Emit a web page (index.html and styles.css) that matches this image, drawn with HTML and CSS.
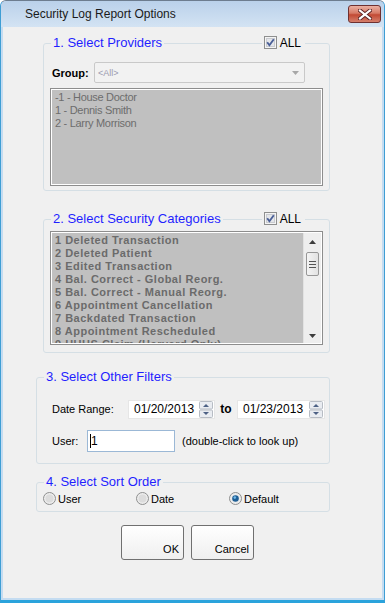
FILE: index.html
```html
<!DOCTYPE html>
<html lang="en">
<head>
    <meta charset="UTF-8">
    <meta name="viewport" content="width=device-width, initial-scale=1.0">
    <title>Security Log Report Options</title>
    <link rel="stylesheet" href="styles.css">
</head>
<body>
<div class="window">
    <div class="titlebar">
        <span class="title">Security Log Report Options</span>
        <button class="close" type="button" aria-label="Close">
            <svg width="14" height="11" viewBox="0 0 14 11">
                <path d="M2 1.5 L12 9.5 M12 1.5 L2 9.5" stroke="#5b2323" stroke-width="4" stroke-linecap="square"/>
                <path d="M2 1.5 L12 9.5 M12 1.5 L2 9.5" stroke="#ffffff" stroke-width="2.2" stroke-linecap="square"/>
            </svg>
        </button>
    </div>

    <div class="client">
        <!-- 1. providers -->
        <div class="group narrow">
            <div class="group-head">
                <span class="legend">1. Select Providers</span>
                <span class="all">
                    <svg class="check" width="13" height="13" viewBox="0 0 13 13">
                        <rect x="0.5" y="0.5" width="12" height="12" fill="#f4f4f4" stroke="#8e8f8f"/>
                        <rect x="2.5" y="2.5" width="8" height="8" fill="#e4e6ea" stroke="#c9cbd0"/>
                        <path d="M3.2 6.3 L5.4 9.2 L9.8 3.2" fill="none" stroke="#4a5f97" stroke-width="1.9"/>
                    </svg>
                    ALL
                </span>
            </div>
            <div class="combo-row">
                <span class="combo-label">Group:</span>
                <div class="combo">
                    <span class="combo-text">&lt;All&gt;</span>
                    <svg width="7" height="4" viewBox="0 0 7 4"><path d="M0 0 H7 L3.5 4 Z" fill="#a8a8a8"/></svg>
                </div>
            </div>
            <div class="listbox providers">
                <div>-1 - House Doctor</div>
                <div>1 - Dennis Smith</div>
                <div>2 - Larry Morrison</div>
            </div>
        </div>

        <!-- 2. categories -->
        <div class="group narrow second">
            <div class="group-head">
                <span class="legend">2. Select Security Categories</span>
                <span class="all">
                    <svg class="check" width="13" height="13" viewBox="0 0 13 13">
                        <rect x="0.5" y="0.5" width="12" height="12" fill="#f4f4f4" stroke="#8e8f8f"/>
                        <rect x="2.5" y="2.5" width="8" height="8" fill="#e4e6ea" stroke="#c9cbd0"/>
                        <path d="M3.2 6.3 L5.4 9.2 L9.8 3.2" fill="none" stroke="#4a5f97" stroke-width="1.9"/>
                    </svg>
                    ALL
                </span>
            </div>
            <div class="listbox categories">
                <div class="items">
                    <div>1 Deleted Transaction</div>
                    <div>2 Deleted Patient</div>
                    <div>3 Edited Transaction</div>
                    <div>4 Bal. Correct - Global Reorg.</div>
                    <div>5 Bal. Correct - Manual Reorg.</div>
                    <div>6 Appointment Cancellation</div>
                    <div>7 Backdated Transaction</div>
                    <div>8 Appointment Rescheduled</div>
                    <div>9 HUHS Claim (Harvard Only)</div>
                </div>
                <div class="scrollbar">
                    <svg width="7" height="4" viewBox="0 0 7 4"><path d="M0 4 H7 L3.5 0 Z" fill="#3c3c3c"/></svg>
                    <div class="thumb"><span></span><span></span><span></span></div>
                    <div class="track"></div>
                    <svg width="7" height="4" viewBox="0 0 7 4"><path d="M0 0 H7 L3.5 4 Z" fill="#3c3c3c"/></svg>
                </div>
            </div>
        </div>

        <!-- 3. other filters -->
        <div class="group third">
            <div class="group-head">
                <span class="legend">3. Select Other Filters</span>
            </div>
            <div class="filter-row dates">
                <span class="filter-label">Date Range:</span>
                <div class="date-box">
                    <span class="date-text">01/20/2013</span>
                    <svg class="spin" width="14" height="17" viewBox="0 0 14 17">
                        <rect x="0.5" y="0.5" width="13" height="7.5" rx="1" fill="#e9ecf1" stroke="#b7bcc4"/>
                        <rect x="0.5" y="9" width="13" height="7.5" rx="1" fill="#e9ecf1" stroke="#b7bcc4"/>
                        <path d="M4 6 H10 L7 3 Z" fill="#4d6185"/>
                        <path d="M4 11 H10 L7 14 Z" fill="#4d6185"/>
                    </svg>
                </div>
                <span class="to">to</span>
                <div class="date-box">
                    <span class="date-text">01/23/2013</span>
                    <svg class="spin" width="14" height="17" viewBox="0 0 14 17">
                        <rect x="0.5" y="0.5" width="13" height="7.5" rx="1" fill="#e9ecf1" stroke="#b7bcc4"/>
                        <rect x="0.5" y="9" width="13" height="7.5" rx="1" fill="#e9ecf1" stroke="#b7bcc4"/>
                        <path d="M4 6 H10 L7 3 Z" fill="#4d6185"/>
                        <path d="M4 11 H10 L7 14 Z" fill="#4d6185"/>
                    </svg>
                </div>
            </div>
            <div class="filter-row user">
                <span class="filter-label short">User:</span>
                <div class="user-box"><span class="caret"></span>1</div>
                <span class="hint">(double-click to look up)</span>
            </div>
        </div>

        <!-- 4. sort order -->
        <div class="group fourth">
            <div class="group-head">
                <span class="legend">4. Select Sort Order</span>
            </div>
            <div class="radios">
                <label class="radio">
                    <svg width="13" height="13" viewBox="0 0 13 13"><circle cx="6.5" cy="6.5" r="6" fill="#ececec" stroke="#8e8f8f"/><circle cx="6.5" cy="6.5" r="4" fill="#dcdcdc"/></svg>
                    User
                </label>
                <label class="radio">
                    <svg width="13" height="13" viewBox="0 0 13 13"><circle cx="6.5" cy="6.5" r="6" fill="#ececec" stroke="#8e8f8f"/><circle cx="6.5" cy="6.5" r="4" fill="#dcdcdc"/></svg>
                    Date
                </label>
                <label class="radio">
                    <svg width="13" height="13" viewBox="0 0 13 13"><circle cx="6.5" cy="6.5" r="6" fill="#ececec" stroke="#8e8f8f"/><circle cx="6.5" cy="6.5" r="3.3" fill="#1f5f95"/><circle cx="5.8" cy="5.6" r="1.3" fill="#6fb8e8"/></svg>
                    Default
                </label>
            </div>
        </div>

        <div class="buttons">
            <button class="button" type="button">OK</button>
            <button class="button" type="button">Cancel</button>
        </div>
    </div>
</div>
</body>
</html>
```

FILE: styles.css
```css
body {
    margin: 0;
    font-family: "Liberation Sans", Arial, sans-serif;
    font-size: 11px;
    color: #000;
    background: #fff;
}
.window {
    width: 385px;
    height: 603px;
    box-sizing: border-box;
    display: flex;
    flex-direction: column;
    border: 1px solid #3f9ed4;
    border-top-color: #6d7d8f;
    border-bottom: 3px solid #2aa3dc;
    border-radius: 6px 6px 0 0;
    background: #c4dcf1;
    overflow: hidden;
}
.titlebar {
    height: 26px;
    flex: none;
    display: flex;
    justify-content: space-between;
    align-items: flex-start;
    padding: 0 3px 0 24px;
    background: linear-gradient(#bad1ea, #d3e3f3);
}
.title {
    font-size: 12px;
    line-height: 26px;
    color: #1a1a1a;
}
.close {
    width: 33px;
    height: 18px;
    margin-top: 4px;
    padding: 0;
    display: flex;
    align-items: center;
    justify-content: center;
    border: 1px solid #6e3030;
    border-radius: 3px;
    background: linear-gradient(#eab0a2, #d67a66 45%, #c24a34 55%, #d47f6c);
}
.client {
    flex: 1;
    margin: 0 2px 2px;
    padding: 16px 52px 0 33px;
    background: #f0f0f0;
}
.group {
    border: 1px solid #d5dfe5;
    border-radius: 3px;
}
.group.narrow {
    margin-left: 7px;
    padding-bottom: 4px;
}
.group.second {
    margin-top: 28px;
    padding-bottom: 7px;
}
.group.third {
    margin-top: 24px;
    padding-bottom: 11px;
}
.group.fourth {
    margin-top: 18px;
    padding-bottom: 5px;
}
.group-head {
    display: flex;
    justify-content: space-between;
    align-items: center;
    margin-top: -9px;
    padding: 0 24px 0 7px;
    height: 15px;
}
.legend {
    padding: 0 2px;
    font-size: 13px;
    line-height: 15px;
    color: #1f1fff;
    background: #f0f0f0;
}
.all {
    display: flex;
    align-items: center;
    gap: 3px;
    padding: 0 4px 0 2px;
    font-size: 12px;
    background: #f0f0f0;
}
.combo-row {
    display: flex;
    align-items: center;
    margin-top: 12px;
    padding-left: 8px;
}
.combo-label {
    width: 42px;
    font-weight: bold;
}
.combo {
    width: 211px;
    height: 21px;
    box-sizing: border-box;
    display: flex;
    align-items: center;
    justify-content: space-between;
    padding: 0 5px 0 3px;
    border: 1px solid #c9c9c9;
    border-radius: 2px;
    background: #f2f2f2;
}
.combo-text {
    font-size: 9px;
    color: #9a9ab0;
}
.listbox {
    margin: 5px 6px 0;
    box-sizing: border-box;
    border: 1px solid #8d8d8d;
    box-shadow: inset 0 0 0 1px #fff;
    background: #c0c0c0;
    color: #6d6d6d;
    overflow: hidden;
}
.providers {
    height: 98px;
    padding: 2px 0 0 4px;
    line-height: 13px;
    letter-spacing: -0.3px;
}
.categories {
    height: 114px;
    display: flex;
    padding: 1px 1px 1px 1px;
}
.items {
    flex: 1;
    padding: 1px 0 0 3px;
    font-weight: bold;
    line-height: 13px;
    letter-spacing: 0.5px;
    color: #6b6b6b;
    white-space: nowrap;
    overflow: hidden;
}
.scrollbar {
    width: 17px;
    display: flex;
    flex-direction: column;
    align-items: center;
    padding: 7px 0 5px;
    background: #eeeeee;
    border-left: 1px solid #e2e2e2;
}
.thumb {
    width: 13px;
    height: 24px;
    box-sizing: border-box;
    margin-top: 8px;
    display: flex;
    flex-direction: column;
    align-items: center;
    justify-content: center;
    gap: 2px;
    border: 1px solid #979797;
    border-radius: 2px;
    background: linear-gradient(90deg, #f4f4f4, #e2e2e2);
}
.thumb span {
    width: 7px;
    height: 1px;
    background: #555;
}
.track {
    flex: 1;
}
.filter-row {
    display: flex;
    align-items: center;
    padding-left: 15px;
}
.dates {
    margin-top: 15px;
    height: 20px;
}
.user {
    margin-top: 11px;
}
.filter-label {
    width: 76px;
}
.filter-label.short {
    width: 35px;
}
.date-box {
    width: 87px;
    height: 19px;
    box-sizing: border-box;
    display: flex;
    align-items: center;
    justify-content: space-between;
    padding: 0 1px 0 5px;
    background: #fff;
    border: 1px solid #e6e6e6;
}
.date-box + .to + .date-box {
    width: 88px;
}
.date-text {
    font-size: 12px;
}
.to {
    width: 22px;
    text-align: center;
    font-weight: bold;
    font-size: 12px;
}
.user-box {
    width: 88px;
    height: 22px;
    box-sizing: border-box;
    display: flex;
    align-items: center;
    padding-left: 2px;
    border: 1px solid #9bb8d6;
    background: #fff;
    font-size: 12px;
}
.caret {
    width: 1px;
    height: 14px;
    background: #000;
}
.hint {
    margin-left: 7px;
}
.radios {
    display: grid;
    grid-template-columns: 93px 93px 93px;
    margin-top: 2px;
    padding-left: 6px;
}
.radio {
    display: flex;
    align-items: center;
    gap: 2px;
    height: 15px;
}
.buttons {
    display: flex;
    gap: 7px;
    margin: 13px 0 0 85px;
}
.button {
    width: 63px;
    height: 35px;
    display: flex;
    align-items: flex-end;
    justify-content: flex-end;
    padding: 0 4px 4px 0;
    border: 1px solid #707070;
    border-radius: 3px;
    background: linear-gradient(#ffffff, #f7f7f7 50%, #efefef);
    font-family: "Liberation Sans", Arial, sans-serif;
    font-size: 11px;
    color: #000;
}
```
